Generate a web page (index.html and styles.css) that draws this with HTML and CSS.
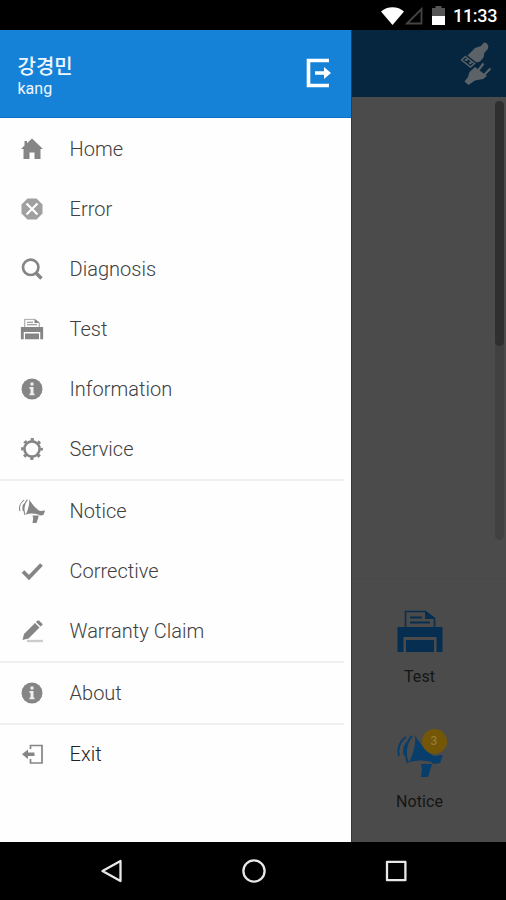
FILE: index.html
```html
<!DOCTYPE html>
<html lang="en">
<head>
<meta charset="utf-8">
<title>Menu</title>
<link rel="stylesheet" href="styles.css">
</head>
<body>
<svg class="defs" aria-hidden="true">
  <symbol id="printer" viewBox="0 0 46 42">
    <path d="M8.500 17V1.500h20l9 7V17" fill="none" stroke="currentColor" stroke-width="1.600"/>
    <path d="M28 1v8h10z" fill="currentColor"/>
    <path d="M13 7.500h12M13 12.500h20" stroke="currentColor" stroke-width="2"/>
    <path d="M.5 17h45v25h-6V27H6.500v15h-6z" fill="currentColor"/>
    <path d="M9 30h28v12H9z" fill="currentColor"/>
  </symbol>
  <symbol id="horn" viewBox="0 0 48 42">
    <path d="M16 1C10 7 8 19 12 28M10 2C3 7 1 15 3 21M13 6c-5 4-6 9-4 15" fill="none" stroke="currentColor" stroke-width="2"/>
    <path d="M19 0c2 5 12 18 19 21l9-1-3 8-6 1-3-2c-8-2-15-2-22 0 4-7 7-18 6-27zM25 29h11l-4 13h-7l1-8z" fill="currentColor"/>
  </symbol>
  <symbol id="info" viewBox="0 0 22 22">
    <circle cx="11" cy="11" r="10.500" fill="currentColor"/>
    <path d="M9.500 4.500h3v3h-3zM8.500 9h4v6.500h1v1.800h-5v-1.800h1V11h-1z" fill="#eee"/>
  </symbol>
</svg>
<header class="status">
  <svg class="wifi" viewBox="0 0 23 18"><path d="M0 4.500C6-1.200 17-1.200 23 4.500L11.500 18z" fill="#fff"/></svg>
  <svg class="signal" viewBox="0 0 18 18"><path d="M2 16.500L16.500 2v14.500z" fill="none" stroke="#444" stroke-width="1.800"/></svg>
  <svg class="battery" viewBox="0 0 13 19"><path d="M3.500 0h6v2H13v8H0V2h3.500z" fill="#555"/><path d="M0 10h13v9H0z" fill="#fff"/></svg>
  <span class="clock">11:33</span>
</header>
<main class="screen">
  <aside class="drawer">
    <div class="profile">
      <div class="who"><span class="name">강경민</span><span class="user">kang</span></div>
      <svg class="logout" viewBox="0 0 26 30"><path d="M23 2.500H2.500v25H23" fill="none" stroke="#fff" stroke-width="3.600"/><path d="M9 13.300h9V9l7 6-7 6v-4.300H9z" fill="#fff"/></svg>
    </div>
    <nav class="menu">
      <ul class="group">
        <li><svg viewBox="0 0 24 24"><path d="M12 1.500l11 10.500h-2.500v10H14.500v-6.500h-5V22h-6V12H1L4.500 8.500V4H7v2.200z" fill="currentColor"/></svg>Home</li>
        <li class="pale"><svg viewBox="0 0 24 24"><path d="M7.500 1.500h9l6 6v9l-6 6h-9l-6-6v-9z" fill="currentColor"/><path d="M6.500 6.500l11 11M17.500 6.500l-11 11" stroke="#fff" stroke-width="2.200"/></svg>Error</li>
        <li><svg viewBox="0 0 24 24"><circle cx="10.700" cy="10.300" r="7.700" fill="none" stroke="currentColor" stroke-width="2.700"/><path d="M16 16l5.500 5.500" stroke="currentColor" stroke-width="3.500"/></svg>Diagnosis</li>
        <li><svg viewBox="0 0 24 24"><use href="#printer" x="0.500" y="1.500" width="23" height="21"/></svg>Test</li>
        <li><svg viewBox="0 0 24 24"><use href="#info" x="1" y="1" width="22" height="22"/></svg>Information</li>
        <li><svg viewBox="0 0 24 24"><circle cx="12" cy="12" r="7.600" fill="none" stroke="currentColor" stroke-width="2.600"/><circle cx="12" cy="12" r="9.600" fill="none" stroke="currentColor" stroke-width="2.600" stroke-dasharray="3.200 4.340" stroke-dashoffset="1.600"/></svg>Service</li>
      </ul>
      <ul class="group">
        <li><svg class="wide" viewBox="0 0 28 24"><use href="#horn" x="0" y="0" width="28" height="24"/></svg>Notice</li>
        <li><svg viewBox="0 0 24 24"><path d="M3 12.500l6 6L21.500 5.500" fill="none" stroke="currentColor" stroke-width="3.800"/></svg>Corrective</li>
        <li><svg viewBox="0 0 24 24"><path d="M2.500 21l1.500-6L15 4l4.500 4.500L8.500 19.500zM16 3l1.500-1.500 1.500 0 3.500 3.500v1L20.500 7.500z" fill="currentColor"/><path d="M7 22h16" stroke="#ccc" stroke-width="2.400"/></svg>Warranty Claim</li>
      </ul>
      <ul class="group">
        <li><svg viewBox="0 0 24 24"><use href="#info" x="1" y="1" width="22" height="22"/></svg>About</li>
      </ul>
      <ul class="group">
        <li class="dark"><svg viewBox="0 0 24 24"><path d="M10.500 7V3.500h11.500v17.500H10.500V17" fill="none" stroke="currentColor" stroke-width="1.700"/><path d="M2 12.200l6-4.700v3h6.500v3.400H8v3z" fill="currentColor"/></svg>Exit</li>
      </ul>
    </nav>
  </aside>
  <section class="page">
    <div class="appbar">
      <svg viewBox="0 0 32 44"><g fill="#5c6368"><path d="M7.500 13.500L15 6l6-2 3-3.500 2.500.5 2 3-1 3.500-3 3-1 5-3.500 4-3.500 1z"/><path d="M5.500 14.500l9 7-4 3.500-9-7z" fill="none" stroke="#5c6368" stroke-width="1.400"/><path d="M4.500 18l2-1.800 1.800 1.500-2 1.800zM8.500 21l2-1.800 1.800 1.500-2 1.800z"/><path d="M15 25l12 9-4 3-8 1.500L8.500 43 4.500 39.500 8 35l1.500-5z"/></g><path d="M18.500 28l5-6.500M24.500 32.500l6-6" stroke="#5c6368" stroke-width="2.200"/></svg>
    </div>
    <div class="content"><div class="track"><div class="thumb"></div></div></div>
    <div class="tiles">
      <div class="tile"><svg class="t-print" viewBox="0 0 46 42"><use href="#printer"/></svg><span>Test</span></div>
      <div class="tile"><div class="hornbox"><svg class="t-horn" viewBox="0 0 48 42"><use href="#horn"/></svg><b class="badge">3</b></div><span>Notice</span></div>
    </div>
  </section>
</main>
<footer class="navbar">
  <svg viewBox="0 0 24 24"><path d="M2.500 12L20.500 2v20z"/></svg>
  <svg viewBox="0 0 24 24"><circle cx="12" cy="12" r="10.600"/></svg>
  <svg viewBox="0 0 24 24"><rect x="3" y="2.800" width="18.400" height="18.400"/></svg>
</footer>
</body>
</html>
```

FILE: styles.css
```css
* { box-sizing: border-box; }
body {
  margin: 0;
  height: 900px;
  display: flex;
  flex-direction: column;
  overflow: hidden;
  background: #000;
  font-family: Roboto, "Noto Sans CJK KR", sans-serif;
}
.defs { display: none; }
svg { display: block; flex: none; }
.status {
  height: 30px;
  display: flex;
  align-items: center;
  justify-content: flex-end;
  padding: 1px 9px 0 0;
  color: #fff;
}
.wifi { width: 23px; height: 18px; }
.signal { width: 18px; height: 18px; margin-left: 1px; }
.battery { width: 13px; height: 19px; margin-left: 9px; }
.clock {
  width: 44px;
  margin-left: 8px;
  font-size: 18px;
  font-weight: 500;
  line-height: 28px;
  letter-spacing: -0.300px;
  white-space: nowrap;
}
.screen { height: 812px; display: flex; }
.drawer { width: 351px; background: #fefefe; }
.profile {
  height: 88px;
  display: flex;
  align-items: flex-start;
  justify-content: space-between;
  padding: 23px 19px 0 17.500px;
  background: #1682d7;
  border-bottom: 1px solid #0b71c7;
  color: #eef6ff;
}
.who { display: flex; flex-direction: column; }
.name { font-size: 20px; line-height: 28px; font-weight: 500; }
.user { font-size: 16px; line-height: 16px; }
.logout { width: 26px; height: 30px; margin-top: 5px; }
.menu { padding-top: 1px; }
.group {
  margin: 0;
  padding: 0;
  list-style: none;
}
.group + .group::before {
  content: "";
  display: block;
  width: 344px;
  height: 2px;
  background: #f0f0f0;
}
.group li {
  height: 60px;
  display: flex;
  align-items: center;
  padding-left: 20px;
  color: #404040;
  font-size: 20px;
  font-weight: 300;
  letter-spacing: 0.020px;
}
.group svg { width: 24px; height: 24px; margin-right: 25.500px; color: #858585; }
.group .wide { width: 28px; margin: 0 23.500px 0 -2px; }
.group .pale svg { color: #a0a0a0; }
.group .dark { height: 57px; color: #222; }
.page {
  flex: 1;
  display: flex;
  flex-direction: column;
  background: #4b4b4b;
  border-left: 1px solid #383838;
}
.appbar {
  height: 67px;
  display: flex;
  justify-content: flex-end;
  padding: 12px 14px 0 0;
  background: #06263f;
}
.appbar svg { width: 32px; height: 44px; }
.content {
  height: 482px;
  display: flex;
  justify-content: flex-end;
  padding: 4px 2px 0 0;
  border-bottom: 1px solid #484848;
}
.track { width: 9px; height: 439px; border-radius: 5px; background: #414141; }
.thumb { height: 245px; border-radius: 5px; background: #2f2f2f; }
.tiles { padding-right: 19px; }
.tile {
  height: 125px;
  display: flex;
  flex-direction: column;
  align-items: center;
  padding-top: 31px;
  color: #151515;
  font-size: 16px;
  letter-spacing: 0.100px;
}
.tile span { line-height: 20px; margin-top: 15px; }
.t-print { width: 46px; height: 42px; color: #062e50; }
.hornbox { position: relative; }
.t-horn { width: 48px; height: 42px; color: #073e6b; }
.badge {
  position: absolute;
  top: -6px;
  right: -3px;
  width: 25px;
  height: 25px;
  border-radius: 50%;
  background: #735707;
  color: #99803a;
  font-size: 12px;
  font-weight: 400;
  line-height: 25px;
  text-align: center;
}
.navbar {
  height: 58px;
  display: flex;
  align-items: center;
  justify-content: center;
  gap: 118px;
  padding-left: 2px;
}
.navbar svg {
  width: 24px;
  height: 24px;
  fill: none;
  stroke: #e8e8e8;
  stroke-width: 2.300;
  stroke-linejoin: round;
}
```
